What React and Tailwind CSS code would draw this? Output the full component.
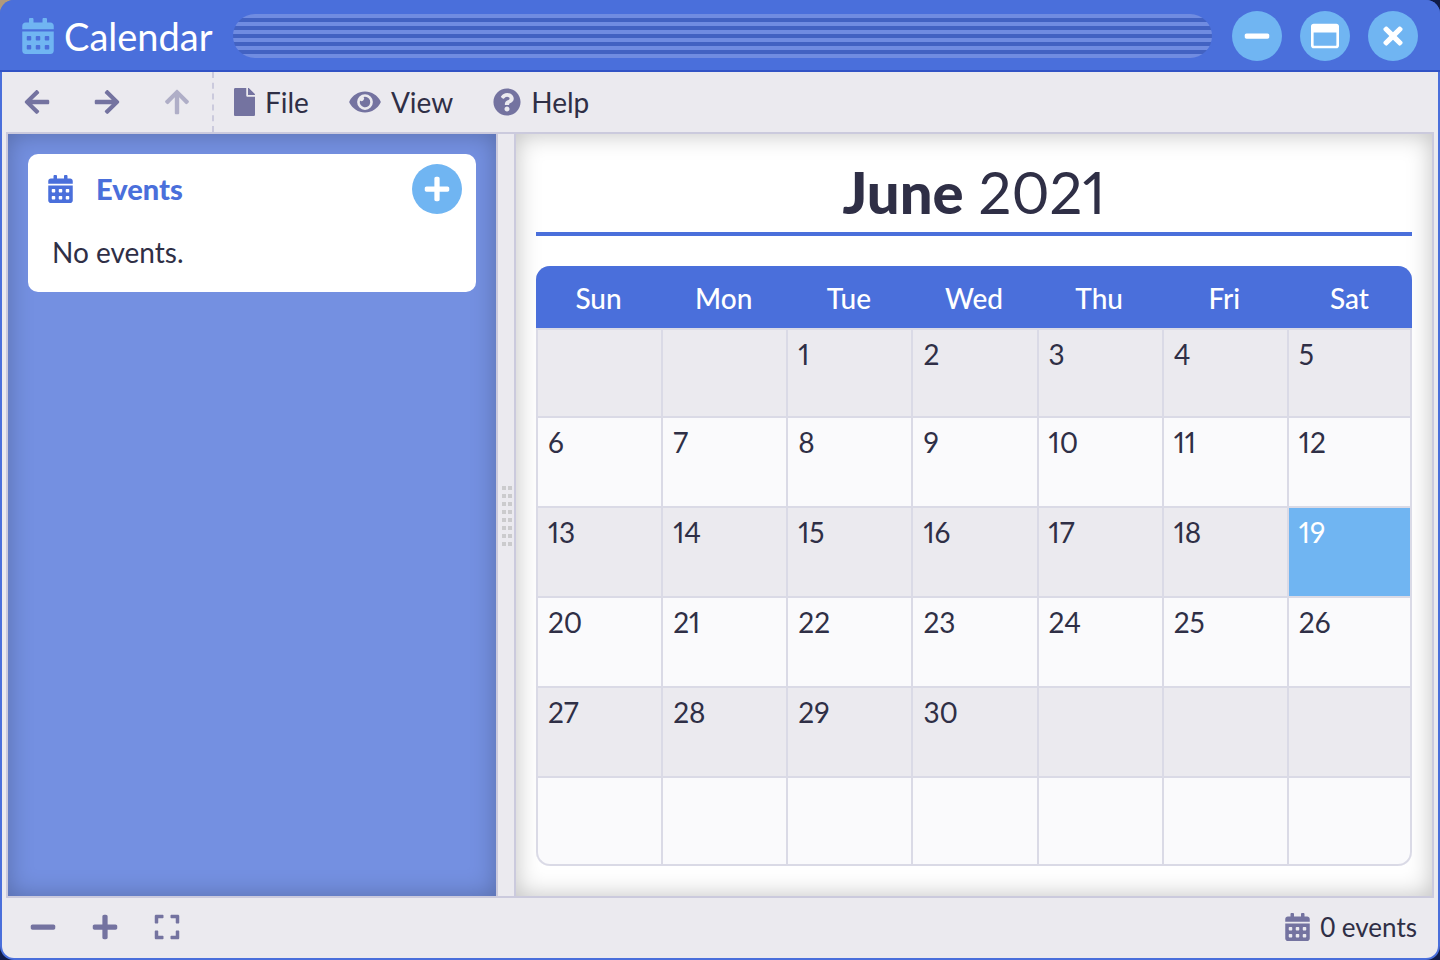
import {
  FaArrowLeft,
  FaArrowRight,
  FaArrowUp,
  FaCalendarAlt,
  FaExpand,
  FaEye,
  FaFile,
  FaMinus,
  FaPlus,
  FaQuestionCircle,
  FaRegWindowMaximize,
  FaTimes,
} from "react-icons/fa";

const WEEKDAYS = ["Sun", "Mon", "Tue", "Wed", "Thu", "Fri", "Sat"];
const FIRST_WEEKDAY = 2;
const DAYS_IN_MONTH = 30;
const TODAY = 19;

const WEEKS = Array.from({ length: 6 }, (_, week) =>
  Array.from({ length: 7 }, (_, day) => {
    const date = week * 7 + day - FIRST_WEEKDAY + 1;
    return date >= 1 && date <= DAYS_IN_MONTH ? date : null;
  })
);

function RoundButton({ label, children }) {
  return (
    <button
      type="button"
      aria-label={label}
      className="flex size-[50px] shrink-0 items-center justify-center rounded-full bg-[#70b5f2] text-[28px] text-white"
    >
      {children}
    </button>
  );
}

function TitleBar() {
  return (
    <header className="flex h-[72px] shrink-0 items-center border-b-2 border-[#3253c5] bg-[#4a6fdb] pt-[2px] pr-[22px] pl-5">
      <FaCalendarAlt className="size-9 shrink-0 text-[#70b5f2]" />
      <h1 className="ml-2 text-[38px] leading-[48px] text-white">Calendar</h1>
      <div className="mx-5 h-11 flex-1 rounded-[22px] bg-[repeating-linear-gradient(to_bottom,#708ce1_0px,#708ce1_4px,#4262c2_4px,#4262c2_8px)]" />
      <div className="flex gap-[18px]">
        <RoundButton label="Minimize">
          <FaMinus />
        </RoundButton>
        <RoundButton label="Maximize">
          <FaRegWindowMaximize />
        </RoundButton>
        <RoundButton label="Close">
          <FaTimes />
        </RoundButton>
      </div>
    </header>
  );
}

function NavButton({ label, disabled, children }) {
  return (
    <button
      type="button"
      aria-label={label}
      disabled={disabled}
      className="flex h-full w-[70px] items-center justify-center text-[28px] text-[#7473a0] disabled:opacity-50"
    >
      {children}
    </button>
  );
}

function MenuButton({ icon, label }) {
  return (
    <button type="button" className="flex h-full items-center gap-[10px] text-[28px]">
      <span className="text-[#7473a0]">{icon}</span>
      {label}
    </button>
  );
}

function Toolbar() {
  return (
    <nav className="flex h-[60px] shrink-0 items-stretch">
      <div className="flex border-r-2 border-dashed border-[#cbcadd]">
        <NavButton label="Back">
          <FaArrowLeft />
        </NavButton>
        <NavButton label="Forward">
          <FaArrowRight />
        </NavButton>
        <NavButton label="Up" disabled>
          <FaArrowUp />
        </NavButton>
      </div>
      <div className="flex gap-10 pl-5">
        <MenuButton icon={<FaFile className="w-[21px]" />} label="File" />
        <MenuButton icon={<FaEye className="w-8" />} label="View" />
        <MenuButton icon={<FaQuestionCircle />} label="Help" />
      </div>
    </nav>
  );
}

function EventsPanel() {
  return (
    <aside className="w-[492px] shrink-0 border-2 border-[#cbcadd] bg-[#7490e1] p-5 shadow-[inset_0_0_24px_rgba(0,0,0,0.25)]">
      <section className="rounded-[10px] bg-white">
        <div className="flex h-[70px] items-center pr-[14px] pl-5 text-[#4a6fdb]">
          <FaCalendarAlt className="h-7 w-[25px]" />
          <h2 className="ml-[23px] flex-1 text-[29px] font-black">Events</h2>
          <RoundButton label="Add event">
            <FaPlus />
          </RoundButton>
        </div>
        <p className="px-6 pt-2 pb-5 text-[28px] leading-10">No events.</p>
      </section>
    </aside>
  );
}

function SplitHandle() {
  return (
    <div className="flex w-4 shrink-0 items-center justify-center border-y-2 border-[#cbcadd]">
      <div className="ml-[2px] grid grid-cols-2 gap-x-[2px] gap-y-1 pt-[2px]">
        {Array.from({ length: 16 }, (_, i) => (
          <span key={i} className="size-1 bg-[#cbcbcd]" />
        ))}
      </div>
    </div>
  );
}

function MonthView() {
  return (
    <main className="flex min-w-0 flex-1 flex-col border-2 border-[#cbcadd] bg-white px-5 pt-5 pb-[30px] shadow-[inset_0_0_24px_rgba(0,0,0,0.25)]">
      <h2 className="mb-[30px] h-[82px] border-b-4 border-[#4a6fdb] text-center text-[58px] leading-[76px] proportional-nums">
        <span className="font-black">June</span> 2021
      </h2>
      <div className="overflow-hidden rounded-[14px] bg-[#dadae6]">
        <table className="w-full table-fixed border-separate border-spacing-0">
          <thead>
            <tr className="h-[62px]">
              {WEEKDAYS.map((day) => (
                <th key={day} scope="col" className="bg-[#4a6fdb] p-0 pt-[2px] text-[28px] font-medium text-white">
                  {day}
                </th>
              ))}
            </tr>
          </thead>
          <tbody>
            {WEEKS.map((week, w) => (
              <tr key={w} className="group h-[90px] first:h-[88px] odd:bg-[#ebeaef] even:bg-[#fafafc]">
                {week.map((date, d) => (
                  <td
                    key={d}
                    className={
                      "border-t-2 border-l-2 border-[#dadae6] py-1 pl-[10px] align-top text-[28px] leading-10 proportional-nums last:border-r-2 group-last:border-b-2 group-last:first:rounded-bl-[14px] group-last:last:rounded-br-[14px] " +
                      (date === TODAY ? "bg-[#70b5f2] text-white" : "")
                    }
                  >
                    {date}
                  </td>
                ))}
              </tr>
            ))}
          </tbody>
        </table>
      </div>
    </main>
  );
}

function ZoomButton({ label, children }) {
  return (
    <button
      type="button"
      aria-label={label}
      className="flex h-full w-[62px] items-center justify-center text-[28px] text-[#7473a0]"
    >
      {children}
    </button>
  );
}

function StatusBar() {
  return (
    <footer className="flex h-[60px] shrink-0 items-center justify-between pr-[21px] pb-[2px] pl-[10px]">
      <div className="flex h-full">
        <ZoomButton label="Zoom out">
          <FaMinus />
        </ZoomButton>
        <ZoomButton label="Zoom in">
          <FaPlus />
        </ZoomButton>
        <ZoomButton label="Fit">
          <FaExpand />
        </ZoomButton>
      </div>
      <div className="flex items-center gap-[10px] text-[26px]">
        <FaCalendarAlt className="h-7 w-[25px] text-[#7473a0]" />
        <span>0 events</span>
      </div>
    </footer>
  );
}

export default function App() {
  return (
    <div className="h-screen bg-[#111c48] bg-[linear-gradient(135deg,#b09a7c_0px,#b09a7c_40px,#111c48_41px)] font-['Lato','Open_Sans',sans-serif] text-[#2f2f46]">
      <div className="flex h-full flex-col overflow-hidden rounded-[14px] bg-[#4a6fdb]">
        <TitleBar />
        <div className="mx-[2px] mb-[2px] flex min-h-0 flex-1 flex-col rounded-b-[12px] bg-[#ebeaef]">
          <Toolbar />
          <div className="mx-1 flex min-h-0 flex-1">
            <EventsPanel />
            <SplitHandle />
            <MonthView />
          </div>
          <StatusBar />
        </div>
      </div>
    </div>
  );
}
